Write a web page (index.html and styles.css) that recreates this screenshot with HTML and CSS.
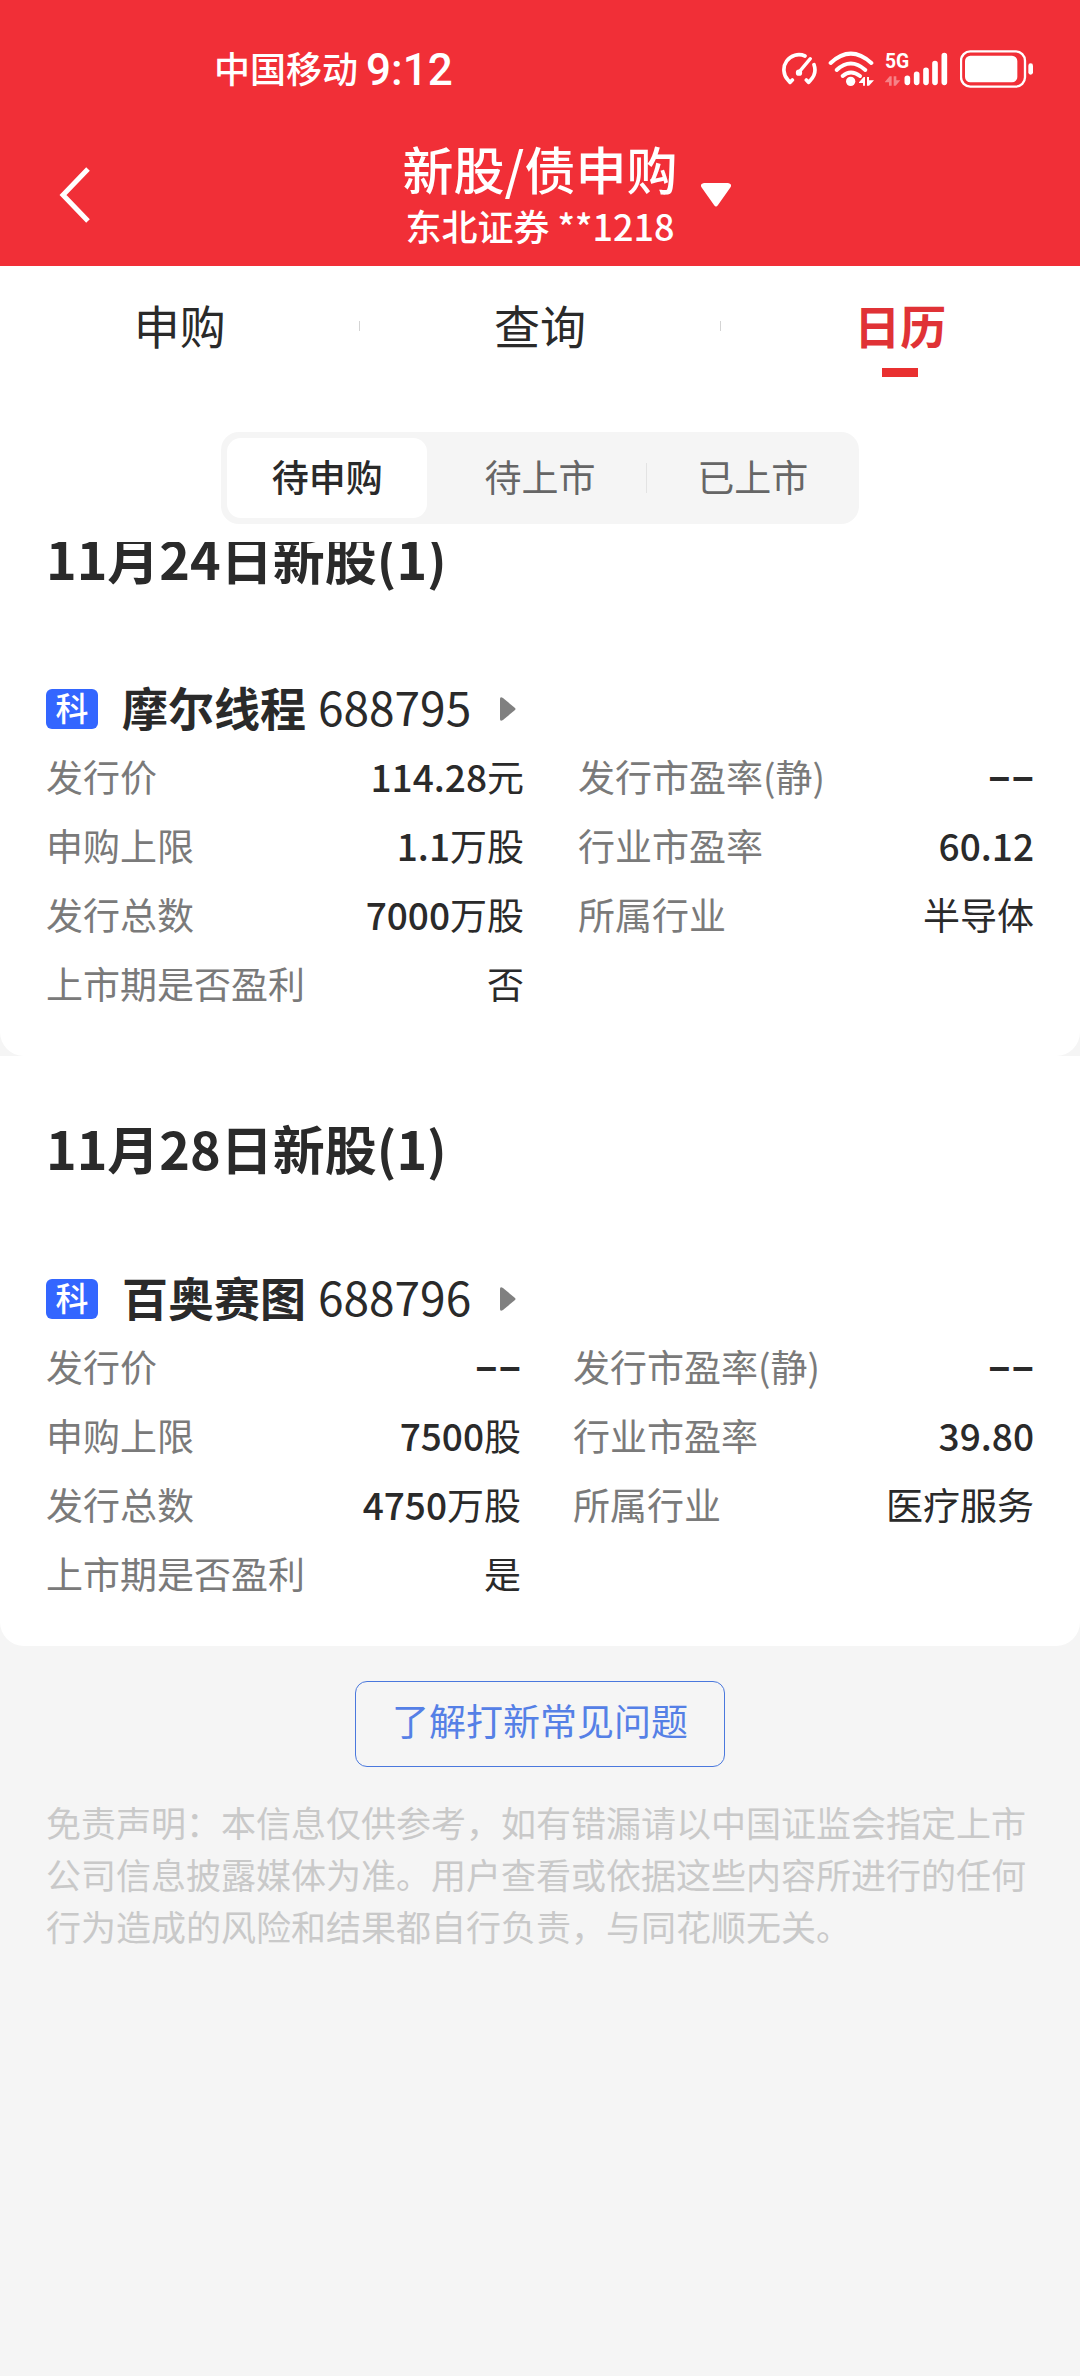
FILE: index.html
```html
<!DOCTYPE html>
<html lang="zh-CN">
<head>
    <meta charset="UTF-8">
    <meta name="viewport" content="width=device-width, initial-scale=1.0">
    <title>新股/债申购</title>
    <link rel="stylesheet" href="styles.css">
</head>
<body>

<header class="header">
    <div class="status-bar">
        <div class="carrier"><span class="name">中国移动</span> <span class="clock">9:12</span></div>
        <div class="status-icons">
            <svg width="36" height="34" viewBox="0 0 108 102" fill="none" stroke="#fff" stroke-width="11" stroke-linecap="round" stroke-linejoin="round">
                <path d="M34 84L27 91L21 84A45 45 0 0 1 72 12"/>
                <path d="M99 38A45 45 0 0 1 89 84L83 91L76 84"/>
                <path d="M56 58L88 20" stroke-width="10"/>
                <circle cx="54" cy="62" r="7" fill="#fff" stroke-width="5"/>
            </svg>
            <svg width="46" height="36" viewBox="0 0 138 108" fill="none" stroke="#fff" stroke-width="12" stroke-linecap="round">
                <path d="M8 36Q68 -20 130 36"/>
                <path d="M26 57Q68 18 112 57"/>
                <path d="M44 75Q68 54 96 75"/>
                <circle cx="68" cy="91" r="14" fill="#fff" stroke="none"/>
                <path d="M93 94L107 78H111V104H105V96H93ZM117 78H123V88H138L123 104H117Z" fill="#fff" stroke="none"/>
            </svg>
            <svg width="64" height="36" viewBox="0 0 192 108">
                <text class="net-type" x="0" y="50">5G</text>
                <path d="M0 92L14 76H20V104H12V94H0ZM26 76H34V88H46L32 104H26Z" fill="#fff" opacity=".4"/>
                <g stroke="#fff" stroke-width="17" stroke-linecap="round">
                    <path d="M67 82V94M95 70V94M123 58V94M150 38V94M178 14V94"/>
                </g>
            </svg>
            <svg width="74" height="38" viewBox="0 0 222 114">
                <rect x="3" y="4" width="192" height="106" rx="28" fill="none" stroke="#fff" stroke-width="7"/>
                <rect x="15" y="17" width="157" height="80" rx="16" fill="#fff"/>
                <rect x="205" y="40" width="14" height="34" rx="7" fill="#fff"/>
            </svg>
        </div>
    </div>

    <div class="navbar">
        <button class="back" aria-label="返回">
            <svg width="32" height="56" viewBox="0 0 32 56" fill="none" stroke="#fff" stroke-width="5">
                <path d="M30 2L5 28L30 54"/>
            </svg>
        </button>
        <div class="title">
            <h1>新股/债申购</h1>
            <p>东北证券 <span>**1218</span></p>
        </div>
        <button class="switch" aria-label="切换账户">
            <svg width="30" height="24" viewBox="0 0 30 24">
                <path d="M3 0H27Q32 1 29 5L17 22Q15 25 13 22L1 5Q-2 1 3 0Z" fill="#fff"/>
            </svg>
        </button>
    </div>
</header>

<nav class="tabs">
    <a href="#">申购</a>
    <span class="line"></span>
    <a href="#">查询</a>
    <span class="line"></span>
    <a href="#" class="active">日历</a>
</nav>

<div class="segment-wrap">
    <div class="segment">
        <button class="active">待申购</button>
        <button>待上市</button>
        <span class="line"></span>
        <button>已上市</button>
    </div>
</div>

<main class="list">
    <section class="card">
        <h2>11月24日新股(1)</h2>
        <a href="#" class="stock">
            <span class="badge">科</span>
            <strong>摩尔线程</strong>
            <span class="code">688795</span>
            <svg width="16" height="24" viewBox="0 0 16 24"><path d="M0 2Q0 -1 3 1L15 11Q16 12 15 13L3 23Q0 25 0 22Z" fill="#808080"/></svg>
        </a>
        <div class="info">
            <dl>
                <dt>发行价</dt><dd><b>114.28</b>元</dd>
                <dt>申购上限</dt><dd><b>1.1</b>万股</dd>
                <dt>发行总数</dt><dd><b>7000</b>万股</dd>
                <dt>上市期是否盈利</dt><dd>否</dd>
            </dl>
            <dl>
                <dt>发行市盈率(静)</dt><dd><b class="empty">––</b></dd>
                <dt>行业市盈率</dt><dd><b>60.12</b></dd>
                <dt>所属行业</dt><dd>半导体</dd>
            </dl>
        </div>
    </section>

    <section class="card">
        <h2>11月28日新股(1)</h2>
        <a href="#" class="stock">
            <span class="badge">科</span>
            <strong>百奥赛图</strong>
            <span class="code">688796</span>
            <svg width="16" height="24" viewBox="0 0 16 24"><path d="M0 2Q0 -1 3 1L15 11Q16 12 15 13L3 23Q0 25 0 22Z" fill="#808080"/></svg>
        </a>
        <div class="info info-wide">
            <dl>
                <dt>发行价</dt><dd><b class="empty">––</b></dd>
                <dt>申购上限</dt><dd><b>7500</b>股</dd>
                <dt>发行总数</dt><dd><b>4750</b>万股</dd>
                <dt>上市期是否盈利</dt><dd>是</dd>
            </dl>
            <dl>
                <dt>发行市盈率(静)</dt><dd><b class="empty">––</b></dd>
                <dt>行业市盈率</dt><dd><b>39.80</b></dd>
                <dt>所属行业</dt><dd>医疗服务</dd>
            </dl>
        </div>
    </section>

    <button class="faq">了解打新常见问题</button>

    <p class="disclaimer">免责声明：本信息仅供参考，如有错漏请以中国证监会指定上市公司信息披露媒体为准。用户查看或依据这些内容所进行的任何行为造成的风险和结果都自行负责，与同花顺无关。</p>
</main>

</body>
</html>
```

FILE: styles.css
```css
* {
    box-sizing: border-box;
}
body {
    margin: 0;
    min-height: 100vh;
    background-color: #f5f5f5;
    color: #2a2a2a;
    font-family: "Noto Sans CJK SC", sans-serif;
    font-size: 37px;
}
h1, h2, p, dl, dd {
    margin: 0;
}
button {
    padding: 0;
    border: none;
    background: none;
    color: inherit;
    font: inherit;
    cursor: pointer;
}
a {
    color: inherit;
    text-decoration: none;
}
svg {
    display: block;
}

/* Header */
.header {
    background-color: #f12f37;
    color: #fff;
    padding-bottom: 14px;
}
.status-bar {
    display: flex;
    justify-content: space-between;
    align-items: center;
    height: 138px;
    padding: 0 46px 0 214px;
}
.carrier {
    display: flex;
    align-items: center;
    gap: 8px;
    font-size: 36px;
    font-weight: 500;
}
.carrier .name {
    padding-bottom: 4px;
}
.clock {
    padding-top: 2px;
    font-family: Roboto, sans-serif;
    font-size: 44px;
    font-weight: 500;
}
.status-icons {
    display: flex;
    align-items: center;
    gap: 11px;
}
.net-type {
    fill: #fff;
    font-family: Roboto, sans-serif;
    font-size: 58px;
    font-weight: 700;
}
.navbar {
    display: grid;
    grid-template-columns: 1fr auto 1fr;
    align-items: center;
    padding: 0 58px;
}
.back {
    justify-self: start;
}
.switch {
    justify-self: start;
    margin-left: 24px;
}
.title {
    text-align: center;
    font-weight: 500;
}
.title h1 {
    font-size: 51px;
    font-weight: 500;
    line-height: 60px;
}
.title p {
    font-size: 36px;
    line-height: 54px;
}

/* Tabs */
.tabs {
    display: flex;
    background-color: #fff;
    padding-top: 28px;
    height: 166px;
    font-size: 46px;
    line-height: 60px;
}
.tabs a {
    flex: 1;
    text-align: center;
}
.tabs .line {
    width: 1px;
    height: 10px;
    margin-top: 27px;
    background-color: #d4d4d4;
}
.tabs .active {
    color: #e03236;
    font-weight: 700;
}
.tabs .active::after {
    content: "";
    display: block;
    width: 36px;
    height: 9px;
    margin: 14px auto 0;
    background-color: #e93030;
}
.segment-wrap {
    background-color: #fff;
    padding-bottom: 18px;
}
.segment {
    display: flex;
    align-items: center;
    width: 59%;
    height: 92px;
    margin: 0 auto;
    padding: 6px;
    border-radius: 18px;
    background-color: #f5f5f5;
    color: #666;
}
.segment button {
    flex: 1;
    height: 80px;
    border-radius: 14px;
    padding-bottom: 4px;
}
.segment button + button {
    margin-left: 13px;
}
.segment .active {
    background-color: #fff;
    color: #2a2a2a;
    font-weight: 500;
}
.segment .line {
    width: 1px;
    height: 30px;
    margin: 0 6px;
    background-color: #e3e3e3;
}

/* Calendar list, scrolled a little under the tabs */
.list {
    overflow: hidden;
}
.card {
    background-color: #fff;
    padding: 54px 46px 38px;
    border-radius: 0 0 24px 24px;
}
.card:first-child {
    margin-top: -76px;
}
.card h2 {
    margin-bottom: 80px;
    font-size: 52px;
    font-weight: 700;
    line-height: 76px;
}
.stock {
    display: flex;
    align-items: center;
    height: 66px;
    font-size: 46px;
}
.stock strong {
    margin: 0 12px 0 24px;
    padding-bottom: 6px;
    font-weight: 700;
}
.stock .code {
    padding-bottom: 6px;
}
.stock svg {
    margin-left: 29px;
}
.badge {
    width: 52px;
    height: 40px;
    border-radius: 6px;
    background-color: #3366ff;
    color: #fff;
    font-size: 33px;
    font-weight: 500;
    line-height: 36px;
    text-align: center;
}
.info {
    display: grid;
    grid-template-columns: 478fr 456fr;
    column-gap: 54px;
    align-items: start;
    line-height: 69px;
}
.info-wide {
    grid-template-columns: 475fr 461fr;
    column-gap: 52px;
}
.info dl {
    display: grid;
    grid-template-columns: auto 1fr;
    grid-auto-rows: 69px;
}
.info dt {
    color: #7a7a7a;
}
.info dd {
    text-align: right;
}
.info b {
    font-weight: 500;
}
.info .empty {
    font-family: Roboto, sans-serif;
    font-weight: 700;
}

/* Footer */
.faq {
    display: block;
    width: 370px;
    height: 86px;
    margin: 35px auto 29px;
    padding-bottom: 8px;
    border: 1px solid #4a78dd;
    border-radius: 12px;
    color: #5580e6;
}
.disclaimer {
    padding: 0 46px;
    color: #c9c9c9;
    font-size: 35px;
    line-height: 52px;
}
```
